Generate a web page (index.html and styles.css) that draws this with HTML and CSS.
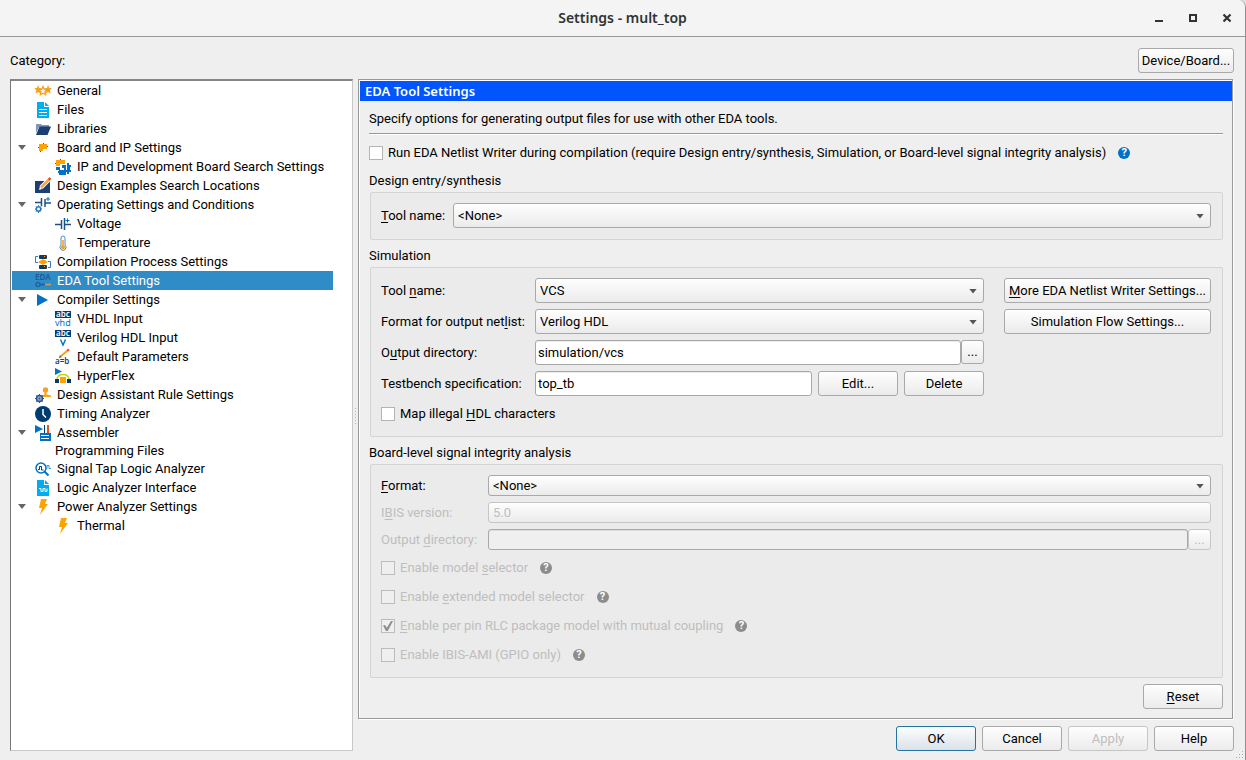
FILE: index.html
```html
<!DOCTYPE html>
<html lang="en">
<head>
    <meta charset="UTF-8">
    <meta name="viewport" content="width=device-width, initial-scale=1.0">
    <title>Settings - mult_top</title>
    <link rel="stylesheet" href="styles.css">
</head>
<body>
    <div class="window">
        <header class="titlebar">
            <h1>Settings - mult_top</h1>
            <div class="window-buttons">
                <button type="button" aria-label="Minimize"><svg viewBox="0 0 10 10"><path d="M1 7h8v2H1z"/></svg></button>
                <button type="button" aria-label="Maximize"><svg viewBox="0 0 10 10"><path d="M1 1h8v8H1zM3 3v4h4V3z" fill-rule="evenodd"/></svg></button>
                <button type="button" aria-label="Close"><svg viewBox="0 0 10 10"><path d="M1.5 1.5l7 7M8.5 1.5l-7 7" stroke="#2e3436" stroke-width="2.2"/></svg></button>
            </div>
        </header>

        <div class="category-bar">
            <span>Category:</span>
            <button type="button" class="btn btn-device">Device/Board...</button>
        </div>

        <div class="main">
            <nav class="tree" aria-label="Category">
                <ul>
                    <li>
                        <div class="row"><span class="toggle"></span>
                            <svg class="icon" viewBox="0 0 16 16"><path d="M3 2l1.200 3 3 .2-2.300 2 .8 3.300L3 8.900.5 10.500l.8-3.300-2-2 2.700-.2zM13 2l1.200 3 2.700.2-2 2 .8 3.300L13 8.900l-2.500 1.600.8-3.300-2.300-2 3-.2z" fill="#f9a01b"/><path d="M8 3.500l1.300 2.800 3 .3L10 8.700l.7 3L8 10.200l-2.700 1.500.7-3-2.300-2.100 3-.3z" fill="#fff" stroke="#f9a01b" stroke-width="1.300"/></svg>
                            <span>General</span></div>
                    </li>
                    <li>
                        <div class="row"><span class="toggle"></span>
                            <svg class="icon" viewBox="0 0 16 16"><path d="M2 0h7v5h5v11H2z" fill="#00aeef"/><path d="M10 0l4 4h-4z" fill="#00aeef"/><path d="M4 7.500h8M4 10.500h8M4 13.500h8" stroke="#fff"/></svg>
                            <span>Files</span></div>
                    </li>
                    <li>
                        <div class="row"><span class="toggle"></span>
                            <svg class="icon" viewBox="0 0 16 16"><path d="M1 3h5l1 1h7v2H4L1 12z" fill="#8296b8"/><path d="M4.500 5.500H16L12.500 14H1z" fill="#1b3f72"/></svg>
                            <span>Libraries</span></div>
                    </li>
                    <li>
                        <div class="row"><button type="button" class="toggle open" aria-label="Collapse"></button>
                            <svg class="icon" viewBox="0 0 16 16"><path d="M4 4h8v5H8v2H4z" fill="#ffa300"/><path d="M8 3h1v1H8zM3 7h1v1H3zM12 6h1v1h-1zM5 11h1v1H5z" fill="#555"/></svg>
                            <span>Board and IP Settings</span></div>
                        <ul>
                            <li>
                                <div class="row"><span class="toggle"></span>
                                    <svg class="icon" viewBox="0 0 16 16"><path d="M1 1h9v4H5v2H1z" fill="#ffa300"/><path d="M5 0h1v1H5zM0 4h1v1H0z" fill="#555"/><path d="M1 8h4v3h4V9H7V6h4v5h1V4h2v2h2v2h-1v3h1v2h-2v2h-2v-2h-1v3H4v-2H3v-2h1v-1H1z" fill="#0071c5"/></svg>
                                    <span>IP and Development Board Search Settings</span></div>
                            </li>
                        </ul>
                    </li>
                    <li>
                        <div class="row"><span class="toggle"></span>
                            <svg class="icon" viewBox="0 0 16 16"><path d="M0 3h15v12H0z" fill="#1b3f72"/><path d="M4 12l1-4 2 3z" fill="#fff"/><path d="M6 9.500L13.500 2" stroke="#fff" stroke-width="4.500"/><path d="M6 9.500L13.500 2" stroke="#f9a64a" stroke-width="2.500"/><path d="M13.500 2L15.500 0" stroke="#f04e23" stroke-width="2.500"/></svg>
                            <span>Design Examples Search Locations</span></div>
                    </li>
                    <li>
                        <div class="row"><button type="button" class="toggle open" aria-label="Collapse"></button>
                            <svg class="icon" viewBox="0 0 16 16"><path d="M0 5.500h6M6.500 1v8M10 2v8M10 6h6" stroke="#1b4f86" stroke-width="1.500"/><path d="M11 2h4M13 0v4" stroke="#0071c5"/><circle cx="3.500" cy="12" r="2.200" fill="none" stroke="#2778b5" stroke-width="1.500"/><path d="M3.500 8.200v1.500M3.500 14.300V16M0 12h1.500M5.500 12H7M1 9.500l1 1M5 13.500l1 1M6 9.500l-1 1M2 13.500l-1 1" stroke="#2778b5"/></svg>
                            <span>Operating Settings and Conditions</span></div>
                        <ul>
                            <li>
                                <div class="row"><span class="toggle"></span>
                                    <svg class="icon" viewBox="0 0 16 16"><path d="M0 8.500h6M6.500 4v9M9.500 2v12M10 8.500h6" stroke="#1b4f86" stroke-width="1.500"/><path d="M10.500 4.500h4M12.500 2.500v4" stroke="#0071c5"/></svg>
                                    <span>Voltage</span></div>
                            </li>
                            <li>
                                <div class="row"><span class="toggle"></span>
                                    <svg class="icon" viewBox="0 0 16 16"><path d="M6 3a2 2 0 0 1 4 0v7a3 3 0 1 1-4 0z" fill="#fff" stroke="#4a90c8"/><path d="M7.200 5h1.600v5.500a2 2 0 1 1-1.600 0z" fill="#f9a01b"/></svg>
                                    <span>Temperature</span></div>
                            </li>
                        </ul>
                    </li>
                    <li>
                        <div class="row"><span class="toggle"></span>
                            <svg class="icon" viewBox="0 0 16 16"><rect x="4" y="1" width="8" height="4" rx="1" fill="#123a66"/><rect x="4" y="11" width="8" height="4" rx="1" fill="#123a66"/><path d="M8 5l5 3-5 3-5-3z" fill="#ffa300"/><path d="M3 2.500H.5v6H3M13 7.500h2.500v6H13" fill="none" stroke="#2f7fc0"/><path d="M9 2h1v1H9zM9 12h1v1H9z" fill="#ffa300"/></svg>
                            <span>Compilation Process Settings</span></div>
                    </li>
                    <li>
                        <div class="row selected"><span class="toggle"></span>
                            <svg class="icon" viewBox="0 0 16 16"><text x="0" y="7" class="icon-text" font-size="8" fill="#1a5b93">EDA</text><circle cx="3" cy="11.500" r="2" fill="none" stroke="#1b66a3" stroke-width="1.500"/><path d="M5 11.500h5" stroke="#1b66a3" stroke-width="2"/><path d="M10 11.500h6" stroke="#c3a15d" stroke-width="1.500"/></svg>
                            <span>EDA Tool Settings</span></div>
                    </li>
                    <li>
                        <div class="row"><button type="button" class="toggle open" aria-label="Collapse"></button>
                            <svg class="icon" viewBox="0 0 16 16"><path d="M2 2l11 6-11 6z" fill="#0071c5"/></svg>
                            <span>Compiler Settings</span></div>
                        <ul>
                            <li>
                                <div class="row"><span class="toggle"></span>
                                    <svg class="icon" viewBox="0 0 16 16"><path d="M0 0h16v7H0z" fill="#003c71"/><text x="1" y="6" class="icon-text" font-size="8" fill="#fff">abc</text><text x="0" y="15" class="icon-text icon-text-light" font-size="9" fill="#0071c5">vhd</text></svg>
                                    <span>VHDL Input</span></div>
                            </li>
                            <li>
                                <div class="row"><span class="toggle"></span>
                                    <svg class="icon" viewBox="0 0 16 16"><path d="M0 0h16v7H0z" fill="#003c71"/><text x="1" y="6" class="icon-text" font-size="8" fill="#fff">abc</text><path d="M5.500 9.500L8 15l2.500-5.500" fill="none" stroke="#0071c5" stroke-width="1.400"/></svg>
                                    <span>Verilog HDL Input</span></div>
                            </li>
                            <li>
                                <div class="row"><span class="toggle"></span>
                                    <svg class="icon" viewBox="0 0 16 16"><path d="M4 9l1-3 2 2z" fill="#1b3f72"/><path d="M5.500 7.500L12 2" stroke="#f9a01b" stroke-width="2"/><path d="M12 2l2-1.700" stroke="#f04e23" stroke-width="2.200"/><text x="0" y="15" class="icon-text" font-size="8" fill="#1b3f72">a=b</text></svg>
                                    <span>Default Parameters</span></div>
                            </li>
                            <li>
                                <div class="row"><span class="toggle"></span>
                                    <svg class="icon" viewBox="0 0 16 16"><path d="M0 0l7 3.500L0 7z" fill="#0071c5"/><path d="M2 11C3 5 13 5 14 11" fill="none" stroke="#c4d600" stroke-width="1.500"/><path d="M5 9h6v6H5z" fill="#ffa300"/><path d="M0 11h4v4H0zM12 11h4v4h-4z" fill="#003c71"/></svg>
                                    <span>HyperFlex</span></div>
                            </li>
                        </ul>
                    </li>
                    <li>
                        <div class="row"><span class="toggle"></span>
                            <svg class="icon" viewBox="0 0 16 16"><circle cx="10.500" cy="3" r="2.700" fill="#f9a01b"/><path d="M9.500 5h2v2.500L16 8.500V10H7V8.500l2.500-1z" fill="#f9a01b"/><circle cx="4.500" cy="11.500" r="3" fill="#aac" stroke="#26558b" stroke-width="1.500"/><circle cx="4.500" cy="11.500" r="1" fill="#26558b"/><path d="M4.500 7v1.500M4.500 14.500V16M0 11.500h1.500M7.500 11.500H9M1.300 8.300l1 1M6.700 13.700l1 1M7.700 8.300l-1 1M2.300 13.700l-1 1" stroke="#26558b"/></svg>
                            <span>Design Assistant Rule Settings</span></div>
                    </li>
                    <li>
                        <div class="row"><span class="toggle"></span>
                            <svg class="icon" viewBox="0 0 16 16"><circle cx="8" cy="8" r="8" fill="#003c71"/><path d="M8 3v5.500l3 3" fill="none" stroke="#fff" stroke-width="1.500"/></svg>
                            <span>Timing Analyzer</span></div>
                    </li>
                    <li>
                        <div class="row"><button type="button" class="toggle open" aria-label="Collapse"></button>
                            <svg class="icon" viewBox="0 0 16 16"><path d="M0 0l8 4-8 4z" fill="#0071c5"/><path d="M9 0h1v8H9z" fill="#003c71"/><path d="M12 0h2v8h-2z" fill="#f04e23"/><path d="M5 8h11v8H5z" fill="#0071c5"/><path d="M6 10.500h8M6 13.500h8" stroke="#fff"/></svg>
                            <span>Assembler</span></div>
                        <ul>
                            <li>
                                <div class="row row-plain"><span class="toggle"></span><span>Programming Files</span></div>
                            </li>
                        </ul>
                    </li>
                    <li>
                        <div class="row"><span class="toggle"></span>
                            <svg class="icon" viewBox="0 0 16 16"><circle cx="6" cy="7" r="5" fill="none" stroke="#0071c5" stroke-width="1.500"/><path d="M9.500 10.500L13.500 14.500" stroke="#0071c5" stroke-width="2"/><path d="M3 8.500h1.500v-3h2v3.500h2" fill="none" stroke="#003c71"/><path d="M11 7.500h1v-3h2v3h2" fill="none" stroke="#2f9bd6"/></svg>
                            <span>Signal Tap Logic Analyzer</span></div>
                    </li>
                    <li>
                        <div class="row"><span class="toggle"></span>
                            <svg class="icon" viewBox="0 0 16 16"><path d="M2 0h7v5h5v11H2z" fill="#00aeef"/><path d="M10 0l4 4h-4z" fill="#00aeef"/><path d="M4 8.500h2v3h2v-3h2v3h2v-3" fill="none" stroke="#fff"/></svg>
                            <span>Logic Analyzer Interface</span></div>
                    </li>
                    <li>
                        <div class="row"><button type="button" class="toggle open" aria-label="Collapse"></button>
                            <svg class="icon" viewBox="0 0 16 16"><path d="M6 0h6l-2 5h3L5 16l2-7H4z" fill="#ffa300"/></svg>
                            <span>Power Analyzer Settings</span></div>
                        <ul>
                            <li>
                                <div class="row"><span class="toggle"></span>
                                    <svg class="icon" viewBox="0 0 16 16"><path d="M6 0h6l-2 5h3L5 16l2-7H4z" fill="#ffa300"/></svg>
                                    <span>Thermal</span></div>
                            </li>
                        </ul>
                    </li>
                </ul>
            </nav>

            <div class="splitter"></div>

            <div class="side">
                <section class="panel">
                    <h2>EDA Tool Settings</h2>
                    <div class="panel-body">
                        <p class="intro">Specify options for generating output files for use with other EDA tools.</p>

                        <div class="check">
                            <input type="checkbox" id="runWriter">
                            <label for="runWriter">Run EDA Netlist Writer during compilation (require Design entry/synthesis, Simulation, or Board-level signal integrity analysis)</label>
                            <button type="button" class="help" aria-label="Help">?</button>
                        </div>

                        <h3>Design entry/synthesis</h3>
                        <div class="group entry">
                            <label for="entryTool"><u>T</u>ool name:</label>
                            <div class="select"><select id="entryTool"><option>&lt;None&gt;</option></select></div>
                        </div>

                        <h3>Simulation</h3>
                        <div class="group">
                            <div class="sim-grid">
                                <label for="simTool">Tool <u>n</u>ame:</label>
                                <div class="select"><select id="simTool"><option>VCS</option></select></div>
                                <button type="button" class="btn btn-wide"><u>M</u>ore EDA Netlist Writer Settings...</button>

                                <label for="simFormat">Format for output net<u>l</u>ist:</label>
                                <div class="select"><select id="simFormat"><option>Verilog HDL</option></select></div>
                                <button type="button" class="btn btn-wide">Simulation Flow Settings...</button>

                                <label for="simDir">O<u>u</u>tput directory:</label>
                                <div class="browse">
                                    <input type="text" id="simDir" value="simulation/vcs">
                                    <button type="button" class="btn btn-browse">...</button>
                                </div>
                                <span></span>

                                <label for="testbench">Testbench specification:</label>
                                <div class="fields">
                                    <input type="text" id="testbench" value="top_tb">
                                    <button type="button" class="btn">Edit...</button>
                                    <button type="button" class="btn">Delete</button>
                                </div>
                            </div>
                            <div class="check">
                                <input type="checkbox" id="mapIllegal">
                                <label for="mapIllegal">Map illegal <u>H</u>DL characters</label>
                            </div>
                        </div>

                        <h3>Board-level signal integrity analysis</h3>
                        <div class="group board">
                            <div class="board-grid">
                                <label for="boardFormat"><u>F</u>ormat:</label>
                                <div class="select"><select id="boardFormat"><option>&lt;None&gt;</option></select></div>

                                <label for="ibis" class="off">I<u>B</u>IS version:</label>
                                <div class="select select-off"><select id="ibis" disabled><option>5.0</option></select></div>

                                <label for="boardDir" class="off">Output <u>d</u>irectory:</label>
                                <div class="browse">
                                    <input type="text" id="boardDir" disabled>
                                    <button type="button" class="btn btn-browse" disabled>...</button>
                                </div>
                            </div>
                            <div class="check off">
                                <input type="checkbox" id="modelSel" disabled>
                                <label for="modelSel">Enable model <u>s</u>elector</label>
                                <button type="button" class="help" aria-label="Help">?</button>
                            </div>
                            <div class="check off">
                                <input type="checkbox" id="extSel" disabled>
                                <label for="extSel">Enable <u>e</u>xtended model selector</label>
                                <button type="button" class="help" aria-label="Help">?</button>
                            </div>
                            <div class="check off">
                                <input type="checkbox" id="rlc" checked disabled>
                                <label for="rlc"><u>E</u>nable per pin RLC package model with mutual coupling</label>
                                <button type="button" class="help" aria-label="Help">?</button>
                            </div>
                            <div class="check off">
                                <input type="checkbox" id="ami" disabled>
                                <label for="ami">Enable IBIS-AMI (GPIO only)</label>
                                <button type="button" class="help" aria-label="Help">?</button>
                            </div>
                        </div>

                        <div class="panel-footer">
                            <button type="button" class="btn"><u>R</u>eset</button>
                        </div>
                    </div>
                </section>

                <footer class="actions">
                    <button type="button" class="btn btn-default">OK</button>
                    <button type="button" class="btn">Cancel</button>
                    <button type="button" class="btn" disabled>Apply</button>
                    <button type="button" class="btn">Help</button>
                </footer>
            </div>
        </div>
        <div class="grip"></div>
    </div>
</body>
</html>
```
FILE: styles.css
```css
* {
    box-sizing: border-box;
}

body {
    margin: 0;
    background-color: #ddd;
    font-family: Roboto, "Noto Sans", sans-serif;
    font-size: 13px;
    line-height: 20px;
    color: #000;
}

h1, h2, h3, p, ul {
    margin: 0;
    padding: 0;
}

button, input, select {
    font: inherit;
    color: inherit;
}

u {
    text-underline-offset: 2px;
    text-decoration-skip-ink: none;
}

.window {
    position: relative;
    display: flex;
    flex-direction: column;
    min-height: 100vh;
    background-color: #efefef;
    border-right: 1px solid #8f8f8f;
    border-radius: 0 8px 0 0;
    overflow: hidden;
}

/* title bar */
.titlebar {
    position: relative;
    display: flex;
    align-items: center;
    justify-content: center;
    height: 37px;
    background-color: #f4f4f4;
    border-bottom: 1px solid #989894;
    color: #2e3436;
}

.titlebar h1 {
    font-family: "Noto Sans", sans-serif;
    font-size: 14px;
    font-weight: 600;
}

.window-buttons {
    position: absolute;
    right: 13px;
    display: flex;
    gap: 24px;
}

.window-buttons button {
    display: flex;
    padding: 0;
    border: none;
    background: none;
}

.window-buttons svg {
    width: 10px;
    height: 10px;
    fill: #2e3436;
}

.category-bar {
    display: flex;
    align-items: center;
    justify-content: space-between;
    padding: 11px 11px 6px 10px;
}

.main {
    display: flex;
    flex: 1;
    padding: 0 11px 9px 10px;
}

/* category tree */
.tree {
    width: 343px;
    padding: 0 19px 0 1px;
    background-color: #fff;
    border: 1px solid #c8c8c8;
    border-top: 2px solid #858585;
    border-left-color: #777;
}

.tree ul {
    list-style: none;
}

.row {
    display: flex;
    align-items: center;
    height: 19px;
    padding-left: 5px;
    white-space: nowrap;
}

.tree ul ul .row {
    padding-left: 25px;
}

.tree ul ul .row-plain {
    height: 17px;
}

.selected {
    background-color: #308cc6;
    color: #fff;
}

.toggle {
    flex: none;
    width: 18px;
    height: 5px;
    padding: 0;
    border: none;
    background: none;
}

.toggle.open::before {
    content: "";
    display: block;
    width: 8px;
    height: 5px;
    margin-left: 1px;
    background-color: #666;
    clip-path: polygon(0 0, 100% 0, 50% 100%);
}

.icon {
    flex: none;
    width: 16px;
    height: 16px;
    margin-right: 6px;
    overflow: visible;
}

.icon-text {
    font-family: "Noto Sans", sans-serif;
    font-weight: 600;
}

.icon-text-light {
    font-weight: 400;
}

.splitter {
    width: 5px;
    display: flex;
    align-items: center;
    justify-content: center;
}

.splitter::before {
    content: "";
    width: 3px;
    height: 17px;
    background-image: radial-gradient(#bbb 1px, transparent 1px);
    background-size: 3px 3px;
}

/* settings page */
.side {
    flex: 1;
    display: flex;
    flex-direction: column;
    min-width: 0;
}

.panel {
    flex: 1;
    margin-right: 1px;
    padding: 1px 0 0 1px;
    border: 1px solid #999;
    box-shadow: inset 1px 1px #fff, 1px 1px #fff;
}

.panel h2 {
    padding: 0 5px;
    background-color: #0055ff;
    color: #fff;
    font-family: "Noto Sans", sans-serif;
    font-size: 13px;
    font-weight: 600;
}

.panel-body {
    padding: 8px 9px 9px;
}

.intro {
    padding-bottom: 4px;
    margin-bottom: 9px;
    border-bottom: 1px solid #989898;
    box-shadow: 0 1px #fff;
}

.panel h3 {
    margin-bottom: 1px;
    padding-top: 1px;
    font-size: 13px;
    font-weight: 400;
}

.panel-body > .check {
    margin-bottom: 7px;
}

.group {
    margin: 0 0 5px 1px;
    padding: 10px 11px 12px 10px;
    background-color: #ebebeb;
    border: 1px solid #d4d4d4;
    border-radius: 2px;
}

.entry {
    display: flex;
    align-items: center;
    gap: 8px;
    padding-bottom: 11px;
}

.entry .select {
    flex: 1;
}

.sim-grid {
    display: grid;
    grid-template-columns: 154px 1fr 227px;
    row-gap: 6px;
    align-items: center;
    margin-bottom: 8px;
}

.board-grid {
    display: grid;
    grid-template-columns: 107px 1fr;
    row-gap: 6px;
    align-items: center;
    margin-bottom: 8px;
}

.sim-grid label, .board-grid label {
    white-space: nowrap;
}

.board {
    margin-bottom: 6px;
}

.board .check + .check {
    margin-top: 9px;
}

.browse, .fields {
    display: flex;
}

.fields {
    gap: 6px;
}

input[type="text"] {
    flex: 1;
    min-width: 0;
    height: 25px;
    padding: 0 2px;
    background-color: #fff;
    border: 1px solid #a8a8a8;
    border-radius: 3px;
    box-shadow: inset 0 1px #ececec;
}

input[type="text"]:disabled {
    background-color: #efefef;
    box-shadow: inset 0 1px #ddd;
}

.btn {
    width: 80px;
    height: 25px;
    padding: 0;
    background-image: linear-gradient(#fefefe, #ebebeb);
    border: 1px solid #a9a9a9;
    border-radius: 3px;
    white-space: nowrap;
}

.btn-device {
    width: 96px;
}

.btn-wide {
    width: 207px;
    margin-left: 20px;
}

.btn-browse {
    width: 23px;
    height: 24px;
}

.btn-default {
    background-image: linear-gradient(#fdfdfe, #d9e1e8);
    border-color: #2573a0;
}

.btn:disabled {
    border-color: #c6c6c6;
    color: #bebebe;
}

.select {
    position: relative;
}

.select select {
    display: block;
    width: 100%;
    height: 25px;
    padding: 0 20px 0 4px;
    appearance: none;
    background-color: #f5f5f5;
    background-image: linear-gradient(#fefefe, #ebebeb);
    border: 1px solid #a9a9a9;
    border-radius: 3px;
}

.select::after {
    content: "";
    position: absolute;
    top: calc(50% - 2px);
    right: 7px;
    width: 8px;
    height: 5px;
    background-color: #555;
    clip-path: polygon(0 0, 100% 0, 50% 100%);
    pointer-events: none;
}

.select-off::after {
    display: none;
}

.select select:disabled {
    border-color: #c6c6c6;
    color: #bebebe;
    opacity: 1;
}

/* rows in the board group are lower than the others */
.board .select select,
.board input[type="text"],
.board .btn {
    height: 21px;
}

.board .btn-browse {
    line-height: 18px;
}

.check {
    display: flex;
    align-items: center;
    height: 20px;
}

.check input {
    flex: none;
    width: 14px;
    height: 14px;
    margin: 0 5px 0 0;
    appearance: none;
    background-color: #fff;
    border: 1px solid #b4b4b4;
}

.check input:disabled {
    background-color: #efefef;
    border-color: #bcbcbc;
}

.check input:checked::before {
    content: "";
    display: block;
    width: 10px;
    height: 10px;
    margin: 1px;
    background-color: #8f8f8f;
    clip-path: polygon(0 45%, 20% 40%, 38% 68%, 80% 0, 100% 0, 48% 100%, 30% 100%);
}

.off {
    color: #bebebe;
}

.help {
    width: 12px;
    height: 12px;
    margin-left: 12px;
    padding: 0;
    border: none;
    border-radius: 50%;
    background-color: #0071c5;
    color: #fff;
    font-size: 11px;
    font-weight: 700;
    line-height: 12px;
}

.off .help {
    background-color: #8c8c8c;
}

.panel-footer, .actions {
    display: flex;
    justify-content: flex-end;
    gap: 6px;
}

.actions {
    padding-top: 7px;
}

.grip {
    position: absolute;
    right: 1px;
    bottom: 1px;
    width: 12px;
    height: 9px;
    background-image: radial-gradient(#aaa 1px, transparent 1px);
    background-size: 3px 3px;
    clip-path: polygon(100% 0, 100% 100%, 0 100%);
}
```
